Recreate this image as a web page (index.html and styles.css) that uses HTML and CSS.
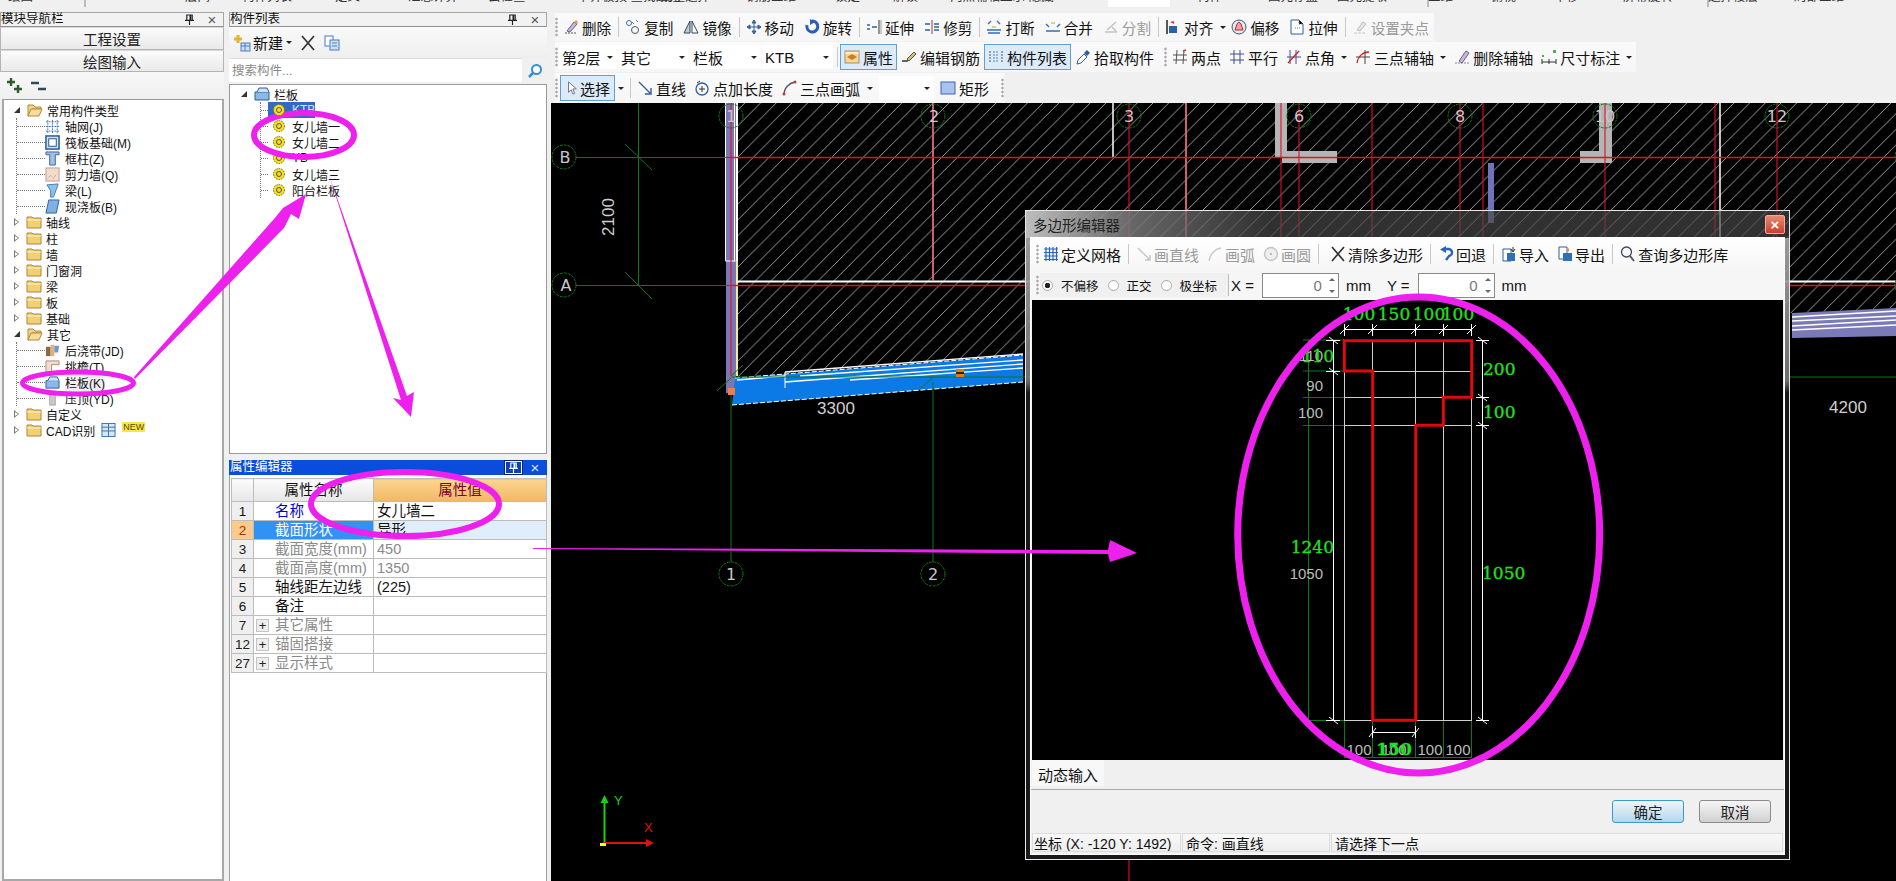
FILE: index.html
```html
<!DOCTYPE html>
<html lang="zh-CN">
<head>
<meta charset="utf-8">
<title>多边形编辑器</title>
<link rel="stylesheet" href="styles.css">
</head>
<body>
<svg class="defs" aria-hidden="true">
  <defs>
    <pattern id="hatch" width="15.7" height="15.7" patternUnits="userSpaceOnUse"><path d="M-1 16.7L16.7 -1" stroke="#c4c4c4" stroke-width=".8"/></pattern>
    <symbol id="pencil" viewBox="0 0 16 16"><path d="M2 14h12" stroke="#555" stroke-dasharray="2 1"/><path d="M4 12l7-9 3 2-7 8z" fill="#c9b8e0" stroke="#6a5a90"/><path d="M11 3l2-2 2 2-1 2z" fill="#e9a23b"/></symbol>
    <symbol id="copy" viewBox="0 0 16 16"><circle cx="4" cy="4" r="2.5" fill="none" stroke="#3a6ea5"/><circle cx="10" cy="11" r="3.5" fill="none" stroke="#555"/><path d="M7 3l2 2M11 1l2 2" stroke="#777"/></symbol>
    <symbol id="mirror" viewBox="0 0 16 16"><path d="M7 2v12H1z" fill="#bcd" stroke="#345"/><path d="M9 2v12h6z" fill="#fff" stroke="#345"/></symbol>
    <symbol id="move" viewBox="0 0 16 16"><path d="M8 1v14M1 8h14M8 1L6 4h4zM8 15l-2-3h4zM1 8l3-2v4zM15 8l-3-2v4z" fill="#4a7dbd" stroke="#2f5f9e"/></symbol>
    <symbol id="rotate" viewBox="0 0 16 16"><path d="M8 2a5.5 5.5 0 1 1-5 4" fill="none" stroke="#2a5cc0" stroke-width="3"/><path d="M6 0v6L11 3z" fill="#2a5cc0"/></symbol>
    <symbol id="extend" viewBox="0 0 16 16"><path d="M1 6h3M1 10h3M6 8h5" stroke="#2f5f9e" stroke-width="1.4"/><path d="M13 1v14" stroke="#333"/><path d="M15 1v14" stroke="#999"/></symbol>
    <symbol id="trim" viewBox="0 0 16 16"><path d="M8 1v14" stroke="#a33"/><path d="M1 5h5M1 11h5M10 5h5M10 11h5M10 8h5" stroke="#2f5f9e" stroke-width="1.3"/></symbol>
    <symbol id="break" viewBox="0 0 16 16"><path d="M2 5l3-3M14 5l-3-3M1 11h14M2 14h12" stroke="#2f6fb5" stroke-width="1.4" fill="none"/><path d="M6 8h4" stroke="#c8a030"/></symbol>
    <symbol id="merge" viewBox="0 0 16 16"><path d="M1 5l3 3M15 5l-3 3M1 12h14" stroke="#2f6fb5" stroke-width="1.4" fill="none"/><path d="M6 4h4" stroke="#c8a030"/></symbol>
    <symbol id="split" viewBox="0 0 16 16"><path d="M2 13h12M4 11L13 3M9 8l4 4" stroke="#c4c4c4" stroke-width="1.6" fill="none"/></symbol>
    <symbol id="align" viewBox="0 0 16 16"><path d="M2 1v14" stroke="#222" stroke-width="1.5"/><path d="M5 3l4-1v3z" fill="#d33"/><rect x="4" y="7" width="8" height="7" fill="#2a62a8"/></symbol>
    <symbol id="offset" viewBox="0 0 16 16"><circle cx="8" cy="8" r="7" fill="#dfe8f4" stroke="#456"/><path d="M4 11l2-6 2-2 2 2 2 6z" fill="#f3a0a0" stroke="#a33"/></symbol>
    <symbol id="stretch" viewBox="0 0 16 16"><path d="M2 1h8l4 4v10H2z" fill="#fff" stroke="#2f5f9e"/><path d="M10 1v4h4M6 9h6" stroke="#777" stroke-dasharray="1 1"/></symbol>
    <symbol id="grip" viewBox="0 0 16 16"><path d="M2 14h12" stroke="#c8c8c8" stroke-dasharray="3 1"/><path d="M5 11l6-8 3 2-6 7z" fill="#e4e4e4" stroke="#bbb"/></symbol>
    <symbol id="prop" viewBox="0 0 16 16"><rect x="1" y="2" width="14" height="12" fill="#f6d98c" stroke="#a87"/><path d="M3 8l5-3 5 3-5 3z" fill="#d07a2a"/><path d="M1 4h14" stroke="#fff"/></symbol>
    <symbol id="rebar" viewBox="0 0 16 16"><path d="M1 12h6" stroke="#333" stroke-width="1.5"/><path d="M6 10l7-7 2 2-7 7z" fill="#d8c070" stroke="#555"/></symbol>
    <symbol id="list" viewBox="0 0 16 16"><path d="M2 2v12M14 2v12" stroke="#555" stroke-dasharray="2 1"/><path d="M5 3h6M5 6h6M5 9h6M5 12h6" stroke="#4a7dbd" stroke-dasharray="2 1"/></symbol>
    <symbol id="pick" viewBox="0 0 16 16"><path d="M2 15l1-4 6-6 3 3-6 6z" fill="#fff" stroke="#2f5f9e"/><path d="M9 4l3-3 3 3-3 3z" fill="#2f5f9e"/></symbol>
    <symbol id="two" viewBox="0 0 16 16"><path d="M5 1l-1 14M12 1l-1 14M1 6h14M1 11h14" stroke="#555" fill="none"/><path d="M11 2l3-1" stroke="#d33" stroke-width="1.5"/></symbol>
    <symbol id="parallel" viewBox="0 0 16 16"><path d="M5 1v14M11 1v14M1 5h14M1 11h14" stroke="#3d4f8e" fill="none"/></symbol>
    <symbol id="angle" viewBox="0 0 16 16"><path d="M4 1v14M10 1v14M1 8h14" stroke="#3d4f8e"/><path d="M2 14L13 2" stroke="#c22" stroke-width="1.3"/></symbol>
    <symbol id="three" viewBox="0 0 16 16"><path d="M10 1v14M1 8h14" stroke="#444"/><path d="M2 14C3 7 8 3 14 3" stroke="#c22" stroke-width="1.3" fill="none"/></symbol>
    <symbol id="del" viewBox="0 0 16 16"><path d="M1 14h14" stroke="#888" stroke-dasharray="2 1"/><path d="M5 12l7-10 3 2-7 10z" fill="#c9b8e0" stroke="#6a5a90"/></symbol>
    <symbol id="dim" viewBox="0 0 16 16"><path d="M1 13h14M1 10v5M8 10v5M15 10v5" stroke="#333"/><rect x="12" y="1" width="3" height="3" fill="#4caf50"/><rect x="1" y="6" width="2" height="2" fill="#4caf50"/></symbol>
    <symbol id="cursor" viewBox="0 0 16 16"><path d="M4 1v12l3-3 2 5 2-1-2-5h4z" fill="#fff" stroke="#667"/></symbol>
    <symbol id="line" viewBox="0 0 16 16"><path d="M2 2l11 11M14 8v6H8" stroke="#2f5f9e" stroke-width="1.4" fill="none"/></symbol>
    <symbol id="linegray" viewBox="0 0 16 16"><path d="M2 2l11 11M14 9v5H9" stroke="#c4c4c4" stroke-width="1.4" fill="none"/></symbol>
    <symbol id="len" viewBox="0 0 16 16"><circle cx="8" cy="9" r="6" fill="none" stroke="#2f5f9e" stroke-width="1.3"/><path d="M8 6v6M5 9h6M3 3l3-2" stroke="#333"/></symbol>
    <symbol id="arc" viewBox="0 0 16 16"><path d="M3 15C3 8 8 3 14 2" stroke="#556" stroke-width="1.4" fill="none"/><circle cx="3" cy="14" r="1.5" fill="#c33"/><circle cx="14" cy="2" r="1.5" fill="#c33"/></symbol>
    <symbol id="arcgray" viewBox="0 0 16 16"><path d="M2 15C3 8 8 3 14 2" stroke="#c8c8c8" stroke-width="1.4" fill="none"/></symbol>
    <symbol id="rect" viewBox="0 0 16 16"><rect x="1" y="2" width="14" height="12" fill="#a9c2ee" stroke="#3b66b5"/></symbol>
    <symbol id="grid" viewBox="0 0 16 16"><path d="M3 1v14M6.500 1v14M10 1v14M13.500 1v14M1 3h14M1 6.500h14M1 10h14M1 13.500h14" stroke="#2a62c0" stroke-width="1.2"/></symbol>
    <symbol id="circlegray" viewBox="0 0 16 16"><circle cx="8" cy="8" r="6.500" fill="#eee" stroke="#c4c4c4" stroke-width="1.4"/><circle cx="8" cy="8" r="1" fill="#aaa"/></symbol>
    <symbol id="cross" viewBox="0 0 16 16"><path d="M2 1l12 14M14 1L2 15" stroke="#333" stroke-width="1.7"/></symbol>
    <symbol id="undo" viewBox="0 0 16 16"><path d="M7 3h3a3.500 3.500 0 0 1 1 7L8 14" fill="none" stroke="#2a62c0" stroke-width="2.400"/><path d="M8 0v7L2 3.500z" fill="#2a62c0"/></symbol>
    <symbol id="import" viewBox="0 0 16 16"><path d="M2 3h8v12H2z" fill="#fff" stroke="#2f5f9e"/><rect x="6" y="7" width="8" height="8" fill="#2f6fb5"/><path d="M12 1v5M10 3l2 3 2-3" stroke="#333" fill="none"/></symbol>
    <symbol id="export" viewBox="0 0 16 16"><path d="M2 1h8v12H2z" fill="#fff" stroke="#2f5f9e"/><rect x="6" y="7" width="9" height="8" fill="#2f6fb5"/><path d="M9 4l3 2v-4z" fill="#d93"/></symbol>
    <symbol id="search" viewBox="0 0 16 16"><circle cx="6.500" cy="6" r="5" fill="#f4f8ff" stroke="#445" stroke-width="1.300"/><path d="M10 10l4 5" stroke="#555" stroke-width="2"/></symbol>
    <symbol id="plus-new" viewBox="0 0 18 18"><path d="M5 1v8M1 5h8" stroke="#e2b72b" stroke-width="3"/><rect x="8" y="9" width="9" height="8" fill="#cfe0f3" stroke="#4a7dbd"/><path d="M8 12h9M12 9v8" stroke="#4a7dbd"/></symbol>
    <symbol id="dup" viewBox="0 0 16 16"><rect x="1" y="1" width="8" height="10" fill="#fff" stroke="#4a7dbd"/><rect x="6" y="5" width="9" height="10" fill="#cfe0f3" stroke="#4a7dbd"/><path d="M8 8h5M8 11h5" stroke="#4a7dbd"/></symbol>
    <symbol id="folder-open" viewBox="0 0 16 16"><path d="M1 3h5l2 2h6v2H5L2 14H1z" fill="#f0d48a" stroke="#b08a3c"/><path d="M4 7h11l-3 7H1z" fill="#f7dd9c" stroke="#b08a3c"/></symbol>
    <symbol id="folder" viewBox="0 0 16 16"><path d="M1 3h5l1 1h8v10H1z" fill="#f2cf72" stroke="#a8863c"/><path d="M1 6h14" stroke="#fff4cf"/></symbol>
    <symbol id="axisnet" viewBox="0 0 16 16"><path d="M3 1v14M8 1v14M13 1v14M1 3h14M1 8h14M1 13h14" stroke="#3a6fc0" stroke-dasharray="2 1"/></symbol>
    <symbol id="raft" viewBox="0 0 16 16"><rect x="1" y="1" width="14" height="14" fill="#cfe0f3" stroke="#224f90" stroke-width="1.500"/><rect x="4" y="4" width="8" height="8" fill="#fff" stroke="#224f90"/></symbol>
    <symbol id="col" viewBox="0 0 16 16"><path d="M1 1h14v3H11v11H5V4H1z" fill="#9fc0e6" stroke="#3a6296"/></symbol>
    <symbol id="shear" viewBox="0 0 16 16"><rect x="1" y="1" width="14" height="14" fill="#f3dcc8" stroke="#b99"/><path d="M3 12l3-3 3 3 3-4" stroke="#a88" stroke-dasharray="1 1" fill="none"/></symbol>
    <symbol id="beam" viewBox="0 0 16 16"><path d="M2 2l12-1-2 6-3 8H6V8z" fill="#8fc0e6" stroke="#3a7bb0"/></symbol>
    <symbol id="slab" viewBox="0 0 16 16"><path d="M4 1h11l-3 14H1z" fill="#7fb0e6" stroke="#2a5f9e"/></symbol>
    <symbol id="pour" viewBox="0 0 16 16"><rect x="1" y="4" width="5" height="10" fill="#8a6a44"/><rect x="6" y="2" width="4" height="12" fill="#e0b080"/><path d="M10 3h5l-1 7h-4z" fill="#6a9ad0"/></symbol>
    <symbol id="eave" viewBox="0 0 16 16"><path d="M1 2h14v4H7v9H1z" fill="#f3dcc8" stroke="#a88"/></symbol>
    <symbol id="rail" viewBox="0 0 16 16"><path d="M1 6h14v8H1z" fill="#8cb8e8" stroke="#2a5f9e"/><path d="M3 6l2-4h8l2 4" fill="#cde0f5" stroke="#2a5f9e"/></symbol>
    <symbol id="coping" viewBox="0 0 16 16"><rect x="5" y="1" width="6" height="14" fill="#c8c8c8" stroke="#aaa"/></symbol>
    <symbol id="cadbox" viewBox="0 0 16 16"><rect x="1" y="1" width="14" height="14" fill="#d6e6f6" stroke="#3a6fa8"/><path d="M8 1v14M1 5h14M1 9h14" stroke="#3a6fa8"/></symbol>
    <symbol id="gear" viewBox="0 0 12 12"><circle cx="6" cy="6" r="5.500" fill="#f5e020" stroke="#7a7000" stroke-dasharray="1.500 1"/><circle cx="6" cy="6" r="2.500" fill="#f5e020" stroke="#555"/></symbol>
    <symbol id="lens" viewBox="0 0 16 16"><circle cx="9.500" cy="6.500" r="4.500" fill="#fff" stroke="#2f8fd8" stroke-width="2"/><path d="M6 10l-4 4" stroke="#2f8fd8" stroke-width="2.500"/></symbol>
    <symbol id="pin" viewBox="0 0 10 12"><path d="M2 1h6v6H2zM0 7h10M5 7v5" fill="none" stroke="#222" stroke-width="1.300"/><path d="M6 1v6" stroke="#222" stroke-width="2"/></symbol>
    <symbol id="pinw" viewBox="0 0 10 12"><path d="M2 1h6v6H2zM0 7h10M5 7v5" fill="none" stroke="#fff" stroke-width="1.300"/><path d="M6 1v6" stroke="#fff" stroke-width="2"/></symbol>
  </defs>
</svg>

<div class="app">
  <svg class="topcut" viewBox="0 0 1896 12">
    <g class="cut">
      <text x="8" y="1">绘图</text><text x="185" y="1">层间</text><text x="242" y="1">构件列表</text><text x="335" y="1">定义</text><text x="408" y="1">汇总计算</text><text x="488" y="1">云检查</text><text x="577" y="1">平齐板顶 查找图元</text><text x="660" y="1">批量选择</text><text x="746" y="1">钢筋三维</text><text x="835" y="1">锁定</text><text x="893" y="1">解锁</text><text x="950" y="1">两点辅轴</text><text x="1000" y="1">显示 隐藏</text><text x="1197" y="1">构件</text><text x="1268" y="1">图元存盘</text><text x="1337" y="1">图元提取</text><text x="1428" y="1">二维</text><text x="1491" y="1">俯视</text><text x="1554" y="1">平移</text><text x="1623" y="1">屏幕旋转</text><text x="1708" y="1">选择楼层</text><text x="1794" y="1">局部三维</text>
    </g>
    <path d="M85 0v7M1428 0v7M1708 0v7" stroke="#888"/>
    <rect x="1108" y="0" width="62" height="7" fill="#fff"/>
  </svg>

  <main class="main">
    <aside class="nav">
      <header class="ptitle"><span>模块导航栏</span><svg class="pinic"><use href="#pin"/></svg><span class="xmark">×</span></header>
      <div class="navbtn">工程设置</div>
      <div class="navbtn">绘图输入</div>
      <div class="navtools">
        <svg class="tool18" viewBox="0 0 18 18"><path d="M5 1v8M1 5h8M12 8v8M8 12h8" stroke="#2c5c2c" stroke-width="2.400"/></svg>
        <svg class="tool18" viewBox="0 0 18 18"><path d="M1 6h8M8 12h8" stroke="#2c4c5c" stroke-width="2.400"/></svg>
      </div>
      <div class="tree navtree">
        <div class="row"><i class="tw open"></i><svg class="fold"><use href="#folder-open"/></svg><span>常用构件类型</span></div>
        <div class="kids">
          <div class="row kid"><i class="stub"></i><svg class="kidic"><use href="#axisnet"/></svg><span>轴网(J)</span></div>
          <div class="row kid"><i class="stub"></i><svg class="kidic"><use href="#raft"/></svg><span>筏板基础(M)</span></div>
          <div class="row kid"><i class="stub"></i><svg class="kidic"><use href="#col"/></svg><span>框柱(Z)</span></div>
          <div class="row kid"><i class="stub"></i><svg class="kidic"><use href="#shear"/></svg><span>剪力墙(Q)</span></div>
          <div class="row kid"><i class="stub"></i><svg class="kidic"><use href="#beam"/></svg><span>梁(L)</span></div>
          <div class="row kid"><i class="stub"></i><svg class="kidic"><use href="#slab"/></svg><span>现浇板(B)</span></div>
        </div>
        <div class="row"><i class="tw"></i><svg class="fold"><use href="#folder"/></svg><span>轴线</span></div>
        <div class="row"><i class="tw"></i><svg class="fold"><use href="#folder"/></svg><span>柱</span></div>
        <div class="row"><i class="tw"></i><svg class="fold"><use href="#folder"/></svg><span>墙</span></div>
        <div class="row"><i class="tw"></i><svg class="fold"><use href="#folder"/></svg><span>门窗洞</span></div>
        <div class="row"><i class="tw"></i><svg class="fold"><use href="#folder"/></svg><span>梁</span></div>
        <div class="row"><i class="tw"></i><svg class="fold"><use href="#folder"/></svg><span>板</span></div>
        <div class="row"><i class="tw"></i><svg class="fold"><use href="#folder"/></svg><span>基础</span></div>
        <div class="row"><i class="tw open"></i><svg class="fold"><use href="#folder-open"/></svg><span>其它</span></div>
        <div class="kids">
          <div class="row kid"><i class="stub"></i><svg class="kidic"><use href="#pour"/></svg><span>后浇带(JD)</span></div>
          <div class="row kid"><i class="stub"></i><svg class="kidic"><use href="#eave"/></svg><span>挑檐(T)</span></div>
          <div class="row kid"><i class="stub"></i><svg class="kidic"><use href="#rail"/></svg><span class="hl">栏板(K)</span></div>
          <div class="row kid"><i class="stub"></i><svg class="kidic"><use href="#coping"/></svg><span>压顶(YD)</span></div>
        </div>
        <div class="row"><i class="tw"></i><svg class="fold"><use href="#folder"/></svg><span>自定义</span></div>
        <div class="row"><i class="tw"></i><svg class="fold"><use href="#folder"/></svg><span>CAD识别</span><svg class="cadic"><use href="#cadbox"/></svg><b class="newtag">NEW</b></div>
      </div>
    </aside>

    <section class="mid">
      <header class="ptitle"><span>构件列表</span><svg class="pinic"><use href="#pin"/></svg><span class="xmark">×</span></header>
      <div class="listbar">
        <svg class="i18"><use href="#plus-new"/></svg><span>新建</span><i class="caret"></i>
        <svg class="i16 gapl"><use href="#cross"/></svg>
        <svg class="i16 gapl"><use href="#dup"/></svg>
      </div>
      <div class="searchbar"><div class="searchinput">搜索构件...</div><div class="searchbtn"><svg class="i16"><use href="#lens"/></svg></div></div>
      <div class="tree listtree">
        <div class="row"><i class="tw open"></i><svg class="fold"><use href="#rail"/></svg><span>栏板</span></div>
        <div class="kids">
          <div class="row kid"><i class="stub"></i><svg class="gear"><use href="#gear"/></svg><span class="sel">KTB</span></div>
          <div class="row kid"><i class="stub"></i><svg class="gear"><use href="#gear"/></svg><span>女儿墙一</span></div>
          <div class="row kid"><i class="stub"></i><svg class="gear"><use href="#gear"/></svg><span>女儿墙二</span></div>
          <div class="row kid"><i class="stub"></i><svg class="gear"><use href="#gear"/></svg><span>YB</span></div>
          <div class="row kid"><i class="stub"></i><svg class="gear"><use href="#gear"/></svg><span>女儿墙三</span></div>
          <div class="row kid"><i class="stub"></i><svg class="gear"><use href="#gear"/></svg><span>阳台栏板</span></div>
        </div>
      </div>
      <header class="ptitle active"><span>属性编辑器</span><span class="pinbox"><svg class="pinic2"><use href="#pinw"/></svg></span><span class="xmark">×</span></header>
      <div class="propbody">
        <table class="prop">
          <colgroup><col class="c-n"><col class="c-name"><col class="c-val"></colgroup>
          <tr class="phead"><th></th><th>属性名称</th><th class="pval">属性值</th></tr>
          <tr><td class="num">1</td><td class="nm blue">名称</td><td class="vl">女儿墙二</td></tr>
          <tr class="cur"><td class="num">2</td><td class="nm">截面形状</td><td class="vl">异形</td></tr>
          <tr class="dis"><td class="num">3</td><td class="nm">截面宽度(mm)</td><td class="vl">450</td></tr>
          <tr class="dis"><td class="num">4</td><td class="nm">截面高度(mm)</td><td class="vl">1350</td></tr>
          <tr><td class="num">5</td><td class="nm">轴线距左边线</td><td class="vl">(225)</td></tr>
          <tr><td class="num">6</td><td class="nm">备注</td><td class="vl"></td></tr>
          <tr class="dis"><td class="num">7</td><td class="nm gp"><i class="pl">+</i>其它属性</td><td class="vl"></td></tr>
          <tr class="dis"><td class="num">12</td><td class="nm gp"><i class="pl">+</i>锚固搭接</td><td class="vl"></td></tr>
          <tr class="dis"><td class="num">27</td><td class="nm gp"><i class="pl">+</i>显示样式</td><td class="vl"></td></tr>
        </table>
      </div>
    </section>

    <section class="work">
      <div class="bar bar1">
        <i class="grip"></i>
        <div class="it"><svg class="i16"><use href="#pencil"/></svg><span>删除</span></div><i class="sep"></i>
        <div class="it"><svg class="i16"><use href="#copy"/></svg><span>复制</span></div>
        <div class="it"><svg class="i16"><use href="#mirror"/></svg><span>镜像</span></div><i class="sep"></i>
        <div class="it"><svg class="i16"><use href="#move"/></svg><span>移动</span></div>
        <div class="it"><svg class="i16"><use href="#rotate"/></svg><span>旋转</span></div><i class="sep"></i>
        <div class="it"><svg class="i16"><use href="#extend"/></svg><span>延伸</span></div>
        <div class="it"><svg class="i16"><use href="#trim"/></svg><span>修剪</span></div><i class="sep"></i>
        <div class="it"><svg class="i16"><use href="#break"/></svg><span>打断</span></div>
        <div class="it"><svg class="i16"><use href="#merge"/></svg><span>合并</span></div>
        <div class="it off"><svg class="i16"><use href="#split"/></svg><span>分割</span></div><i class="sep"></i>
        <div class="it capped"><svg class="i16"><use href="#align"/></svg><span>对齐</span><i class="caret"></i></div>
        <div class="it"><svg class="i16"><use href="#offset"/></svg><span>偏移</span></div>
        <div class="it"><svg class="i16"><use href="#stretch"/></svg><span>拉伸</span></div><i class="sep"></i>
        <div class="it off"><svg class="i16"><use href="#grip"/></svg><span>设置夹点</span></div>
      </div>
      <div class="bar bar2">
        <i class="grip"></i>
        <div class="combo w58"><span>第2层</span><i class="caret"></i></div>
        <div class="combo w72"><span>其它</span><i class="caret"></i></div>
        <div class="combo w72"><span>栏板</span><i class="caret"></i></div>
        <div class="combo w72"><span>KTB</span><i class="caret"></i></div><i class="sep"></i>
        <div class="it on"><svg class="i16"><use href="#prop"/></svg><span>属性</span></div>
        <div class="it"><svg class="i16"><use href="#rebar"/></svg><span>编辑钢筋</span></div>
        <div class="it on"><svg class="i16"><use href="#list"/></svg><span>构件列表</span></div>
        <div class="it"><svg class="i16"><use href="#pick"/></svg><span>拾取构件</span></div><i class="grip g2"></i>
        <div class="it"><svg class="i16"><use href="#two"/></svg><span>两点</span></div>
        <div class="it"><svg class="i16"><use href="#parallel"/></svg><span>平行</span></div>
        <div class="it"><svg class="i16"><use href="#angle"/></svg><span>点角</span><i class="caret"></i></div>
        <div class="it"><svg class="i16"><use href="#three"/></svg><span>三点辅轴</span><i class="caret"></i></div>
        <div class="it"><svg class="i16"><use href="#del"/></svg><span>删除辅轴</span></div>
        <div class="it"><svg class="i16"><use href="#dim"/></svg><span>尺寸标注</span><i class="caret"></i></div>
      </div>
      <div class="bar bar3">
        <i class="grip"></i>
        <div class="it on pick"><svg class="i14"><use href="#cursor"/></svg><span>选择</span></div><i class="caret tight"></i><i class="sep wide"></i>
        <div class="it"><svg class="i16"><use href="#line"/></svg><span>直线</span></div>
        <div class="it"><svg class="i16"><use href="#len"/></svg><span>点加长度</span></div>
        <div class="it arcit"><svg class="i16"><use href="#arc"/></svg><span>三点画弧</span><i class="caret"></i></div>
        <div class="combo blank"><i class="caret"></i></div>
        <div class="it"><svg class="i16"><use href="#rect"/></svg><span>矩形</span></div><i class="grip g3"></i>
      </div>

      <div class="canvas">
        <svg class="draw" viewBox="551 103 1345 778">
          <polygon points="737,103 1896,103 1896,308 1792,313 1023,355 737,377" fill="url(#hatch)"/>
          <g fill="#b5b5b5"><path d="M1275 103h12v48h50v12h-55v-6h-7zM1599 103h13v60h-32v-12h19z"/></g>
          <rect x="1488" y="163" width="6" height="60" fill="#6f74b8"/>
          <rect x="726" y="103" width="10" height="290" fill="#7a78b4"/>
          <path d="M725.500 103V261h10M734.500 103V261" stroke="#fff" fill="none"/>
          <path d="M737 103V376" stroke="#fff" stroke-width="2"/>
          <path d="M737 261V376" stroke="#dede20"/>
          <g stroke="#fff">
            <path d="M1113 103V157M1186 103V280M1720 103V280" stroke-width="1.500"/>
            <path d="M737 281.500H1896" stroke-width="2"/>
            <path d="M933 103V281" stroke-width="1.500"/>
          </g>
          <polygon points="735,378 1023,355 1023,382 732,405" fill="#0b79e6"/>
          <g stroke="#fff" fill="none">
            <path d="M737 380L785 376M785 372L1023 354M785 382L1023 364M800 376L1023 360M850 380L1023 368" stroke-width="1.400"/>
            <path d="M735 378L1023 355M732 405L1023 382" stroke-dasharray="5 2"/>
            <path d="M785 372V388"/>
          </g>
          <polygon points="1792,313 1896,308 1896,336 1792,338" fill="#7b7ab8"/>
          <g stroke="#fff" fill="none" stroke-width="1.300"><path d="M1792 317L1896 311M1792 321L1896 316M1792 326L1896 320M1792 330L1896 325"/></g>
          <g stroke="#e0102a" fill="none">
            <path d="M731 103V376M933 103V281M1129 103V1000M1186 103V284M1281 103V284M1299 103V284M1372 103V284M1460 103V284M1483 103V284M1605 103V284M1715 103V284M1777 103V284" stroke-width="1.100"/>
            <path d="M731 157.500H1896M731 285.500H1896" stroke-width="1.300"/>
          </g>
          <g stroke="#0b7a14" fill="none">
            <path d="M576 157.500H731M576 285.500H731M638.500 103V285M625 144L652 170M625 272L652 299"/>
            <path d="M731 392V562M933 382V562M731 377H1896M731 378L717 391M933 377L919 390M731 376L743 365"/>
            <g stroke-dasharray="3 1">
              <circle cx="564" cy="157" r="12"/><circle cx="564" cy="285" r="12"/>
              <circle cx="731" cy="116" r="12"/><circle cx="933" cy="116" r="12"/><circle cx="1129" cy="116" r="12"/><circle cx="1299" cy="116" r="12"/><circle cx="1460" cy="116" r="12"/><circle cx="1605" cy="116" r="12"/><circle cx="1777" cy="116" r="12"/>
              <circle cx="731" cy="574" r="12"/><circle cx="933" cy="574" r="12"/>
              <circle cx="1907" cy="157" r="12"/><circle cx="1907" cy="285" r="12"/>
            </g>
          </g>
          <g class="axl">
            <text x="565" y="163">B</text><text x="566" y="291">A</text>
            <text x="731" y="122">1</text><text x="934" y="122">2</text><text x="1129" y="122">3</text><text x="1299" y="122">6</text><text x="1460" y="122">8</text><text x="1605" y="122">10</text><text x="1777" y="122">12</text>
            <text x="731" y="580">1</text><text x="933" y="580">2</text>
          </g>
          <g class="dimt">
            <text x="836" y="414">3300</text>
            <text x="1848" y="413">4200</text>
            <text transform="translate(614 217) rotate(-90)">2100</text>
          </g>
          <rect x="956" y="369" width="8" height="8" fill="#e07a12"/><path d="M956 373h8" stroke="#000" stroke-width="1.500"/>
          <rect x="728" y="388" width="7" height="7" fill="#e8824a"/>
          <path d="M604.500 843V800" stroke="#12d412" stroke-width="2"/><path d="M604.500 795l-4 8h8z" fill="#12d412"/>
          <path d="M604 843H648" stroke="#e01010" stroke-width="2"/><path d="M654 843l-8-4v8z" fill="#e01010"/>
          <path d="M600 843h6v3h-6z" fill="#ff2"/>
          <text class="oy" x="614" y="805">Y</text><text class="ox" x="644" y="832">X</text>
        </svg>

        <div class="dialog">
          <div class="dtitle"><span>多边形编辑器</span><button class="dclose">×</button></div>
          <div class="dwin">
            <div class="dbar">
              <i class="grip"></i>
              <div class="dit"><svg class="i16"><use href="#grid"/></svg><span>定义网格</span></div><i class="sep"></i>
              <div class="dit off"><svg class="i16"><use href="#linegray"/></svg><span>画直线</span></div>
              <div class="dit off"><svg class="i16"><use href="#arcgray"/></svg><span>画弧</span></div>
              <div class="dit off"><svg class="i16"><use href="#circlegray"/></svg><span>画圆</span></div><i class="sep"></i>
              <div class="dit clear"><svg class="i16"><use href="#cross"/></svg><span>清除多边形</span></div><i class="sep"></i>
              <div class="dit"><svg class="i16"><use href="#undo"/></svg><span>回退</span></div><i class="sep"></i>
              <div class="dit"><svg class="i16"><use href="#import"/></svg><span>导入</span></div>
              <div class="dit"><svg class="i16"><use href="#export"/></svg><span>导出</span></div><i class="sep"></i>
              <div class="dit"><svg class="i16"><use href="#search"/></svg><span>查询多边形库</span></div>
            </div>
            <div class="dopt">
              <i class="grip"></i>
              <div class="radios">
                <i class="radio on"></i><span>不偏移</span>
                <i class="radio"></i><span>正交</span>
                <i class="radio"></i><span>极坐标</span>
              </div><i class="sep"></i>
              <span class="lab lx">X =</span>
              <div class="spin"><span>0</span><i class="arrows"></i></div>
              <span class="lab lm">mm</span>
              <span class="lab ly">Y =</span>
              <div class="spin"><span>0</span><i class="arrows"></i></div>
              <span class="lab lm">mm</span>
            </div>
            <div class="dcanvas">
              <svg class="draw" viewBox="1032 300 751 460">
                <g stroke="#0b7a14" fill="none">
                  <path d="M1308.500 340V720.500M1303 340H1344M1303 371H1344M1303 397.500H1344M1303 425.500H1344M1303 720.500H1344"/>
                  <path d="M1344.500 720V758M1372.500 720V758M1415.500 720V758M1443.500 720V758M1471.500 720V758M1344 757.500H1472"/>
                </g>
                <g stroke="#cfcfcf" fill="none">
                  <path d="M1344.500 340V720.500M1372.500 340V720.500M1415.500 340V720.500M1443.500 340V720.500M1471.500 340V720.500"/>
                  <path d="M1344 340.500H1472M1344 371.500H1472M1344 397.500H1472M1344 425.500H1472M1344 720.500H1472"/>
                </g>
                <g stroke="#fff" fill="none">
                  <path d="M1344 329.500H1472M1344.500 324V336M1372.500 324V336M1415.500 324V336M1443.500 324V336M1471.500 324V336M1340 334L1349 325M1368 334L1377 325M1411 334L1420 325M1439 334L1448 325M1467 334L1476 325"/>
                  <path d="M1333.500 340V720.500M1326 340.500H1340M1326 371.500H1340M1326 720.500H1340M1329 337L1338 344M1329 368L1338 375M1329 717L1338 724"/>
                  <path d="M1482.500 340V720.500M1476 340.500H1489M1476 397.500H1489M1476 425.500H1489M1476 720.500H1489M1478 337L1487 344M1478 394L1487 401M1478 422L1487 429M1478 717L1487 724"/>
                  <path d="M1372 732.500H1416M1372.500 726V738M1415.500 726V738M1369 737L1376 728M1412 737L1419 728"/>
                </g>
                <polygon points="1344.300,340.700 1471.700,340.700 1471.700,397.300 1443.300,397.300 1443.300,425.300 1415.700,425.300 1415.700,720.300 1372.700,720.300 1372.700,371 1344.300,371" fill="none" stroke="#e00a0a" stroke-width="3"/>
                <g class="gray">
                  <text x="1323" y="361">110</text>
                  <text x="1323" y="391">90</text>
                  <text x="1323" y="418">100</text>
                  <text x="1323" y="579">1050</text>
                  <text class="mid" x="1359" y="755">100</text>
                  <text class="mid" x="1394" y="755">100</text>
                  <text class="mid" x="1430" y="755">100</text>
                  <text class="mid" x="1458" y="755">100</text>
                </g>
                <g class="green">
                  <text class="mid" x="1359" y="320">100</text>
                  <text class="mid" x="1394" y="320">150</text>
                  <text class="mid" x="1429" y="320">100</text>
                  <text class="mid" x="1458" y="320">100</text>
                  <text class="end" x="1334" y="362">110</text>
                  <text x="1483" y="375">200</text>
                  <text x="1483" y="418">100</text>
                  <text class="end" x="1334" y="553">1240</text>
                  <text x="1482" y="579">1050</text>
                  <text class="mid strong" x="1394" y="755">150</text>
                </g>
              </svg>
            </div>
            <div class="dtabs"><span class="dtab">动态输入</span></div>
            <div class="dact"><button class="okbtn">确定</button><button class="nobtn">取消</button></div>
            <div class="dstatus"><span class="st s1">坐标 (X: -120 Y: 1492)</span><span class="st s2">命令: 画直线</span><span class="st s3">请选择下一点</span></div>
          </div>
        </div>
      </div>
    </section>
  </main>

  <svg class="ink" viewBox="0 0 1896 881" aria-hidden="true">
    <g fill="none" stroke="#ee20ee">
      <ellipse cx="78" cy="383" rx="55.500" ry="11" stroke-width="5"/>
      <ellipse cx="304" cy="135" rx="50" ry="22" stroke-width="6"/>
      <ellipse cx="405" cy="504" rx="94" ry="32" stroke-width="6"/>
      <ellipse cx="1418.700" cy="535" rx="181" ry="238" stroke-width="7"/>
    </g>
    <g fill="#ee20ee">
      <polygon points="134,377 274,219 283,208 306,194 299,219 291,214 284,228 135,379"/>
      <polygon points="329,175 407,396 414,392 411,417 393,398 401,400"/>
      <polygon points="533,548 1108,550 1110,540 1137,553 1110,562 1108,554 533,549"/>
    </g>
  </svg>
</div>
</body>
</html>
```

FILE: styles.css
```css
* { box-sizing: border-box; }
html, body { margin: 0; padding: 0; width: 1896px; height: 881px; overflow: hidden; background: #f0f0f0; }
body { font-family: "Liberation Sans", "Noto Sans CJK SC", sans-serif; font-size: 14.6px; color: #111; }
i, b { font-style: normal; display: block; flex: none; }
.defs { position: absolute; width: 0; height: 0; }
.app { position: relative; width: 1896px; height: 881px; display: flex; flex-direction: column; }
.topcut { width: 1896px; height: 12px; flex: none; display: block; }
.cut text { font-size: 12.5px; fill: #333; }
.main { flex: 1; display: flex; min-height: 0; }

/* panel title */
.ptitle { height: 15px; display: flex; align-items: center; font-size: 12.5px; line-height: 15px; background: #f2f2f2; border: 1px solid #a6a6a6; border-bottom-color: #8f8f8f; color: #111; flex: none; }
.ptitle > span:first-child { flex: 1; }
.pinic { width: 9px; height: 11px; margin-right: 10px; }
.xmark { width: 16px; font-size: 15px; text-align: center; color: #555; margin-right: 3px; }
.ptitle.active { background: #0a4ddc; color: #fff; border-color: #0a4ddc; }
.ptitle.active .xmark { color: #dfe8ff; }
.pinbox { width: 17px; height: 13px; border: 1px solid #fff; outline: 1px solid #06226e; display: flex; align-items: center; justify-content: center; margin-right: 5px; background: #0a3fc0; }
.pinic2 { width: 9px; height: 11px; }

/* nav */
.nav { width: 226px; flex: none; display: flex; flex-direction: column; padding-right: 2px; }
.navbtn { height: 23px; flex: none; background: linear-gradient(#fbfbfb, #e9e9e9); border: 1px solid #b5b5b5; border-top-color: #d8d8d8; text-align: center; line-height: 24px; font-size: 14.500px; color: #222; }
.navbtn:nth-of-type(2) { height: 22px; }
.navtools { height: 27px; flex: none; display: flex; align-items: center; gap: 6px; padding-left: 6px; background: linear-gradient(#f8f8f8, #efefef); }
.tool18 { width: 18px; height: 18px; }
.tree { font-size: 12px; background: #fff; color: #111; }
.navtree { flex: 1; border: 2px solid #a8a8a8; border-top: 1px solid #999; margin-left: 2px; padding-top: 2px; }
.row { height: 16px; display: flex; align-items: center; padding-left: 10px; white-space: nowrap; }
.tw { width: 0; height: 0; border-left: 5px solid #777; border-top: 4px solid transparent; border-bottom: 4px solid transparent; position: relative; }
.tw::after { content: ""; position: absolute; left: -4px; top: -2px; width: 0; height: 0; border-left: 3px solid #fff; border-top: 2px solid transparent; border-bottom: 2px solid transparent; }
.tw.open { border: none; border-right: 6px solid #333; border-top: 6px solid transparent; }
.tw.open::after { display: none; }
.fold { width: 16px; height: 16px; margin-left: 7px; margin-right: 4px; flex: none; }
.kids { border-left: 1px dotted #777; }
.navtree .kids { margin-left: 12px; }
.kid { padding-left: 0; }
.stub { width: 28px; border-bottom: 1px dotted #777; }
.kidic { width: 15px; height: 15px; margin-right: 5px; flex: none; }
.hl { background: #eee; }
.cadic { width: 15px; height: 16px; margin-left: 6px; }
.newtag { font-size: 9px; color: #5a4a00; background: #f6e64a; margin: -6px 0 0 6px; padding: 0 1px; line-height: 10px; font-weight: normal; }

/* middle */
.mid { width: 325px; flex: none; padding: 0 4px 0 3px; display: flex; flex-direction: column; background: #f0f0f0; }
.listbar { height: 31px; flex: none; display: flex; align-items: center; padding-left: 4px; font-size: 15px; background: linear-gradient(#fafafa, #eee); }
.listbar .caret { margin-left: 3px; }
.i18 { width: 18px; height: 18px; margin-right: 2px; }
.i16 { width: 16px; height: 16px; flex: none; }
.i14 { width: 14px; height: 16px; flex: none; }
.gapl { margin-left: 8px; }
.searchbar { height: 26px; flex: none; display: flex; }
.searchinput { width: 293px; height: 24px; background: #fff; color: #888; font-size: 12.500px; line-height: 24px; padding-left: 3px; border-top: 1px solid #ddd; }
.searchbtn { flex: 1; display: flex; align-items: center; justify-content: center; }
.listtree { height: 370px; flex: none; border: 1px solid #9a9a9a; padding-top: 1px; }
.listtree .row { padding-left: 11px; }
.listtree .kids { margin-left: 30px; }
.listtree .kid { padding-left: 0; }
.listtree .stub { width: 7px; }
.gear { width: 12px; height: 12px; margin: 0 7px 0 5px; flex: none; }
.sel { background: #316ac5; color: #d8e4f8; height: 16px; line-height: 16px; margin-left: -24px; padding-left: 24px; position: relative; z-index: 0; }
.listtree .row:has(.sel) .gear { position: relative; z-index: 1; }
.mid > .ptitle.active { margin-top: 6px; }
.propbody { flex: 1; background: #fff; border-left: 1px solid #a0a0a0; border-right: 1px solid #a0a0a0; padding: 3px 0 0 1px; }
.prop { border-collapse: collapse; table-layout: fixed; width: 315px; font-size: 14.500px; }
.c-n { width: 22px; } .c-name { width: 120px; } .c-val { width: 173px; }
.prop td, .prop th { border: 1px solid #bcbcbc; padding: 0; height: 19px; line-height: 17px; overflow: hidden; white-space: nowrap; font-weight: normal; }
.prop .phead th { height: 23px; background: linear-gradient(#fcfcfc, #e6e6e6); text-align: center; }
.prop .phead .pval { background: linear-gradient(#fbd68f, #f2b766); color: #7a0030; }
.num { background: #efefef; text-align: center; font-size: 13.500px; }
.nm { padding-left: 21px !important; }
.vl { padding-left: 3px !important; }
.blue { color: #0000c8; }
.cur .num { background: #fccb8c; color: #a03010; }
.cur .nm { background: #3390f5; color: #fff; }
.cur .vl { background: #e0edfb; }
.dis .nm, .dis .vl { color: #8a8a8a; }
.dis .num { color: #222; }
.nm.gp { padding-left: 2px !important; }
.pl { display: inline-block; width: 13px; height: 13px; line-height: 11px; border: 1px solid #c4c4c4; background: #eee; text-align: center; color: #222; margin-right: 6px; vertical-align: middle; font-size: 13px; }

/* toolbars */
.work { flex: 1; min-width: 0; display: flex; flex-direction: column; }
.bar { height: 30px; flex: none; display: flex; align-items: center; width: max-content; margin-left: 4px; background: linear-gradient(#fafafa, #f6f6f6); white-space: nowrap; }
.bar1 { height: 28px; margin-top: 1px; margin-bottom: 1px; }
.bar2, .bar3 { font-size: 15px; }
.bar3 { margin-top: 1px; height: 30px; }
.grip { width: 3px; height: 20px; background-image: radial-gradient(#aaa 1px, transparent 1.200px); background-size: 3px 4px; }
.grip.g2 { margin: 0 1px 0 6px; }
.grip.g3 { margin: 0 0 0 8px; }
.it { display: flex; align-items: center; gap: 3px; padding: 0 5px; height: 26px; }
.it.capped { padding-right: 0; }
.bar2 .it, .bar3 .it { padding: 0 4px; }
.sep { width: 1px; height: 20px; background: #c8c8c8; margin: 0 1px 0 2px; }
.sep.wide { margin: 0 2px 0 6px; }
.off { color: #9a9a9a; }
.caret { width: 0; height: 0; border-left: 3px solid transparent; border-right: 3px solid transparent; border-top: 3px solid #222; margin-left: 4px; }
.bar2 .caret { margin-left: 3px; }
.bar2 .combo .caret { margin-left: 0; }
.caret.tight { margin-left: 3px; }
.on { background: #dcebfa; border: 1px solid #62a0d4; }
.bar2 .on { padding: 0 3px; }
.combo { height: 24px; display: flex; align-items: center; justify-content: space-between; background: #fff; padding: 0 4px 0 3px; margin-right: 1px; }
.w58 { width: 58px; margin-left: 1px; } .w72 { width: 71px; }
.bar2 .sep { margin: 0 2px 0 3px; }
.pick { margin-left: 2px; gap: 1px; }
.arcit { padding-left: 4px !important; }
.combo.blank { width: 55px; background: #fff; margin-left: 2px; margin-right: 2px; justify-content: flex-end; }
.combo.blank .caret { margin-left: 0; }

/* canvas */
.canvas { flex: 1; position: relative; background: #000; overflow: hidden; }
.draw { position: absolute; left: 0; top: 0; width: 100%; height: 100%; display: block; }
.axl text { font-family: "DejaVu Sans", sans-serif; font-size: 16px; fill: #c8c8c8; text-anchor: middle; }
.dimt text { font-family: "Liberation Sans", sans-serif; font-size: 17px; fill: #cfcfcf; text-anchor: middle; }
.ox, .oy { font-family: "Liberation Sans", sans-serif; font-size: 13px; }
.ox { fill: #e01010; } .oy { fill: #12d412; }

/* dialog */
.dialog { position: absolute; left: 474px; top: 107px; width: 765px; height: 650px; border: 1px solid #e8e8e8; padding: 0 5px 5px 5px; background: linear-gradient(transparent 0 27px, rgba(165,165,165,.92) 27px, rgba(120,120,120,.9) 170px, rgba(25,25,25,1) 182px); display: flex; flex-direction: column; }
.dtitle { height: 27px; flex: none; display: flex; align-items: center; justify-content: space-between; font-size: 14.500px; color: #222; margin: 0 -5px; padding: 0 4px 0 7px; background: linear-gradient(90deg, rgba(195,195,195,.97), rgba(120,120,120,.85) 14%, rgba(72,72,72,.68) 32%, rgba(72,72,72,.68)); }
.dclose { width: 20px; height: 19px; padding: 0; border: 1px solid #eaa; border-radius: 2px; background: linear-gradient(#e88a70, #c8402c); color: #fff; font: bold 15px/15px "Liberation Sans", sans-serif; }
.dwin { flex: 1; min-height: 0; display: flex; flex-direction: column; background: #f0f0f0; outline: 1px solid #fff; }
.dbar { height: 32px; flex: none; display: flex; align-items: center; padding-left: 5px; font-size: 15px; background: linear-gradient(#fff, #f6f6f6); white-space: nowrap; }
.dit { display: flex; align-items: center; gap: 2px; padding: 0 4px; }
.dit.clear { margin-left: 4px; }
.dbar .sep { margin: 0 3px; }
.dbar .off { color: #9a9a9a; }
.dopt { height: 30px; flex: none; display: flex; align-items: center; padding-left: 5px; font-size: 15px; background: #f6f6f6; white-space: nowrap; }
.radios { display: flex; align-items: center; height: 24px; font-size: 12.500px; background: #f0f0f0; margin-left: 1px; padding-left: 2px; width: 188px; flex: none; }
.radio { width: 11px; height: 11px; border-radius: 50%; border: 1px solid #aaa; background: #fff; margin-right: 8px; }
.radio.on { background: radial-gradient(#222 0 2.500px, #fff 3px); }
.radios span { margin-right: 9px; }
.dopt .sep { margin: 0 2px 0 0; height: 22px; background: #bbb; }
.lab { flex: none; }
.lx { margin-right: 8px; } .lm { margin: 0 16px 0 7px; } .ly { margin-right: 8px; }
.spin { width: 77px; height: 25px; border: 1px solid #888; background: #fff; display: flex; align-items: center; justify-content: flex-end; padding-right: 2px; color: #777; }
.arrows { width: 8px; height: 17px; margin-left: 6px; position: relative; }
.arrows::before, .arrows::after { content: ""; position: absolute; left: 1px; border-left: 3px solid transparent; border-right: 3px solid transparent; }
.arrows::before { top: 1px; border-bottom: 3px solid #666; }
.arrows::after { bottom: 1px; border-top: 3px solid #666; }
.dcanvas { height: 460px; flex: none; position: relative; background: #000; margin: 0 1px; }
.gray text { font-family: "Liberation Sans", sans-serif; font-size: 15px; fill: #bdbdbd; text-anchor: end; }
.gray .mid { text-anchor: middle; }
.green text { font-family: "DejaVu Serif", serif; font-size: 17px; fill: #20e020; stroke: #20e020; stroke-width: .3px; }
.green .mid { text-anchor: middle; }
.green .end { text-anchor: end; }
.green .strong { font-weight: bold; }
.dtabs { height: 30px; flex: none; border-bottom: 1px solid #aaa; padding: 0 0 4px 1px; }
.dtab { display: block; width: 72px; height: 26px; line-height: 31px; text-align: center; background: #f8f8f8; font-size: 15px; overflow: hidden; }
.dact { height: 43px; flex: none; display: flex; justify-content: flex-end; align-items: center; gap: 15px; padding-right: 13px; }
.okbtn, .nobtn { width: 72px; height: 23px; padding: 0; font: 14.500px "Liberation Sans", "Noto Sans CJK SC", sans-serif; border-radius: 3px; color: #222; }
.okbtn { border: 1px solid #3a9ad0; background: linear-gradient(#eef6fc, #b5d6ea); }
.nobtn { border: 1px solid #8a8a8a; background: linear-gradient(#f6f6f6, #d0d0d0); }
.dstatus { flex: 1; display: flex; gap: 1px; padding: 0 1px; font-size: 14px; min-height: 0; }
.st { border: 1px solid #ddd; background: linear-gradient(#f8f8f8, #eee); padding-left: 1px; white-space: nowrap; line-height: 20px; height: 19px; overflow: hidden; }
.s1 { width: 149px; } .s2 { width: 148px; padding-left: 3px; } .s3 { flex: 1; padding-left: 3px; }

/* annotations */
.ink { position: absolute; left: 0; top: 0; width: 1896px; height: 881px; pointer-events: none; }
```
